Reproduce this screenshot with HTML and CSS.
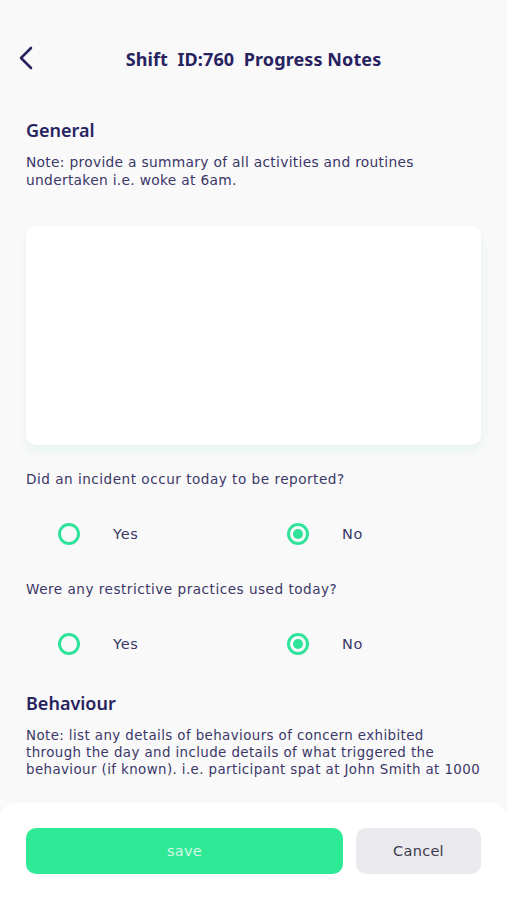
FILE: index.html
```html
<!DOCTYPE html>
<html lang="en">
<head>
<meta charset="utf-8">
<title>Shift ID:760 Progress Notes</title>
<link rel="stylesheet" href="styles.css">
</head>
<body>
<div class="screen">
  <div class="status"></div>
  <header class="topbar">
    <button class="back" aria-label="Back">
      <svg width="16" height="24" viewBox="0 0 16 24"><path d="M13 2 L3 12 L13 22" fill="none" stroke="#27235f" stroke-width="2.6" stroke-linecap="round" stroke-linejoin="round"/></svg>
    </button>
    <h1 class="title">Shift&nbsp; ID:760&nbsp; Progress Notes</h1>
  </header>
  <main class="content">
    <h2 class="section">General</h2>
    <p class="note">Note: provide a summary of all activities and routines<br>undertaken i.e. woke at 6am.</p>
    <div class="textarea"></div>
    <p class="question">Did an incident occur today to be reported?</p>
    <div class="radios">
      <label class="radio"><span class="circle"></span><span class="rlabel">Yes</span></label>
      <label class="radio"><span class="circle on"></span><span class="rlabel">No</span></label>
    </div>
    <p class="question q2">Were any restrictive practices used today?</p>
    <div class="radios">
      <label class="radio"><span class="circle"></span><span class="rlabel">Yes</span></label>
      <label class="radio"><span class="circle on"></span><span class="rlabel">No</span></label>
    </div>
    <h2 class="section s2">Behaviour</h2>
    <p class="note n2">Note: list any details of behaviours of concern exhibited<br>through the day and include details of what triggered the<br>behaviour (if known). i.e. participant spat at John Smith at 1000</p>
  </main>
  <footer class="actions">
    <button class="btn save">save</button>
    <button class="btn cancel">Cancel</button>
  </footer>
</div>
</body>
</html>
```
FILE: styles.css
```css
* { box-sizing: border-box; }
html, body { margin: 0; padding: 0; }
body {
  background: #f9f9f9;
  font-family: "DejaVu Sans", "Noto Sans", sans-serif;
  color: #2d2a5e;
}
.screen {
  width: 507px;
  height: 900px;
  display: flex;
  flex-direction: column;
  overflow: hidden;
}
.status { height: 26px; }
.topbar {
  height: 66px;
  display: flex;
  align-items: center;
  padding-left: 18px;
}
.back {
  background: none;
  border: 0;
  padding: 0;
  width: 20px;
  height: 28px;
  display: flex;
  align-items: center;
  margin-top: -2px;
}
.title {
  flex: 1;
  margin: 0 0 0 -38px;
  text-align: center;
  font-family: "Noto Sans", sans-serif;
  font-size: 18px;
  font-weight: 700;
  color: #27235f;
  letter-spacing: 0.1px;
}
.content {
  flex: 1;
  padding: 27px 26px 0 26px;
}
.section {
  margin: 0;
  font-family: "Noto Sans", sans-serif;
  font-size: 18px;
  font-weight: 600;
  color: #27235f;
  line-height: 22px;
}
.note {
  margin: 12px 0 0 0;
  font-size: 13.8px;
  line-height: 18px;
  color: #3a3768;
  letter-spacing: 0.3px;
  white-space: nowrap;
}
.textarea {
  margin-top: 37px;
  height: 219px;
  background: #fff;
  border-radius: 10px;
  box-shadow: 0 6px 10px rgba(60, 210, 150, 0.10);
}
.question {
  margin: 25px 0 0 0;
  font-size: 13.6px;
  line-height: 18px;
  color: #3a3768;
  letter-spacing: 0.5px;
}
.question.q2 { margin-top: 0; }
.radios {
  display: grid;
  grid-template-columns: 229px 1fr;
  height: 92px;
  align-items: center;
  padding-left: 32px;
}
.radio {
  display: flex;
  align-items: center;
  gap: 33px;
}
.circle {
  width: 22px;
  height: 22px;
  border-radius: 50%;
  border: 3px solid #2fe39a;
  display: flex;
  align-items: center;
  justify-content: center;
}
.circle.on::after {
  content: "";
  width: 10px;
  height: 10px;
  border-radius: 50%;
  background: #2fe39a;
}
.rlabel {
  font-size: 14.5px;
  color: #3a3768;
  letter-spacing: 0.7px;
}
.s2 { margin-top: 2px; }
.n2 { line-height: 17px; margin-top: 13px; font-size: 13.4px; letter-spacing: 0.4px; }
.actions {
  height: 97px;
  background: #fff;
  border-radius: 16px 16px 0 0;
  display: flex;
  gap: 13px;
  padding: 25px 26px 0 26px;
  align-items: flex-start;
}
.btn {
  height: 46px;
  border: 0;
  border-radius: 10px;
  font-family: inherit;
  font-size: 14.5px;
  letter-spacing: 0.3px;
}
.save {
  width: 317px;
  background: #2eea97;
  color: #d3f8e6;
}
.cancel {
  flex: 1;
  background: #e9e9ee;
  color: #3c3b4d;
}
```
